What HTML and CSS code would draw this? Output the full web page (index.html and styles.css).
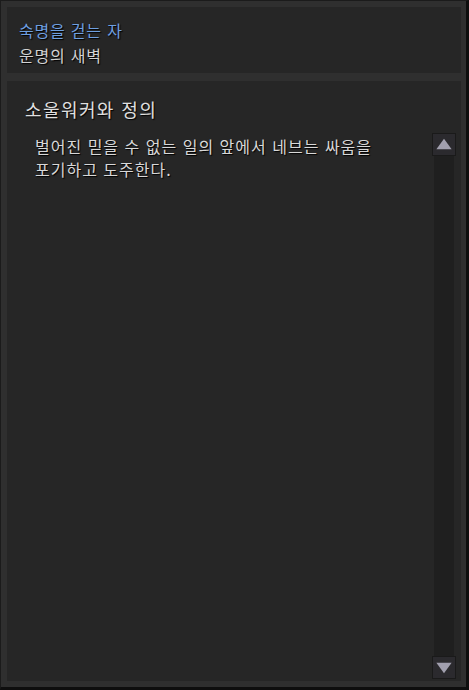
FILE: index.html
```html
<!DOCTYPE html>
<html lang="ko">
<head>
    <meta charset="UTF-8">
    <meta name="viewport" content="width=device-width, initial-scale=1.0">
    <title>숙명을 걷는 자</title>
    <link rel="stylesheet" href="styles.css">
</head>
<body>
    <div class="frame">
        <div class="quest-header">
            <div class="quest-title">숙명을 걷는 자</div>
            <div class="quest-chapter">운명의 새벽</div>
        </div>

        <div class="quest-body">
            <h2 class="section-title">소울워커와 정의</h2>
            <div class="content-row">
                <p class="description">벌어진 믿을 수 없는 일의 앞에서 네브는 싸움을<br>포기하고 도주한다.</p>
                <div class="scrollbar">
                    <div class="scroll-btn">
                        <svg viewBox="0 0 22 22"><polygon points="11,5 19,16 3,16"></polygon></svg>
                    </div>
                    <div class="scroll-track"></div>
                    <div class="scroll-btn">
                        <svg viewBox="0 0 22 22"><polygon points="3,6 19,6 11,17"></polygon></svg>
                    </div>
                </div>
            </div>
        </div>
    </div>
</body>
</html>
```

FILE: styles.css
```css
* {
    margin: 0;
    padding: 0;
    box-sizing: border-box;
}

body {
    font-family: "Noto Sans CJK KR", "Noto Sans", sans-serif;
    background: #111;
    width: 469px;
    height: 690px;
    overflow: hidden;
}

.frame {
    width: 469px;
    height: 690px;
    background: #2f2f2f;
    border: 1px solid #1b1b1b;
    border-right: 3px solid #0e0e0e;
    border-bottom: 3px solid #0e0e0e;
    padding: 6px 5px 6px 6px;
    display: flex;
    flex-direction: column;
    gap: 8px;
}

.quest-header {
    background: #262626;
    height: 66px;
    padding: 11px 12px 0;
    text-shadow: 1px 1px 1px #000;
}

.quest-title {
    color: #6e9fe0;
    font-size: 16px;
    letter-spacing: 0.8px;
    line-height: 24px;
}

.quest-chapter {
    color: #d2d2d2;
    font-size: 16px;
    letter-spacing: 0.8px;
    line-height: 26px;
}

.quest-body {
    flex: 1;
    background: #262626;
    display: flex;
    flex-direction: column;
    padding: 15px 0 2px;
}

.section-title {
    font-weight: normal;
    color: #e0e0e0;
    font-size: 18px;
    letter-spacing: 1.4px;
    line-height: 26px;
    padding-left: 18px;
    text-shadow: 1px 1px 1px #000;
}

.content-row {
    flex: 1;
    display: flex;
    margin-top: 11px;
}

.description {
    flex: 1;
    color: #d8d8d8;
    font-size: 16px;
    letter-spacing: 1px;
    line-height: 23px;
    padding: 2px 0 0 28px;
    text-shadow: 1px 1px 1px #000;
}

.scrollbar {
    width: 24px;
    margin-right: 5px;
    display: flex;
    flex-direction: column;
    align-items: center;
}

.scroll-btn {
    width: 24px;
    height: 23px;
    background: #2b2a2e;
    border: 1px solid #1a1a1a;
}

.scroll-btn svg {
    display: block;
    width: 22px;
    height: 21px;
}

.scroll-btn polygon {
    fill: #a19fae;
}

.scroll-track {
    flex: 1;
    width: 20px;
    background: #1f1f1f;
}
```
